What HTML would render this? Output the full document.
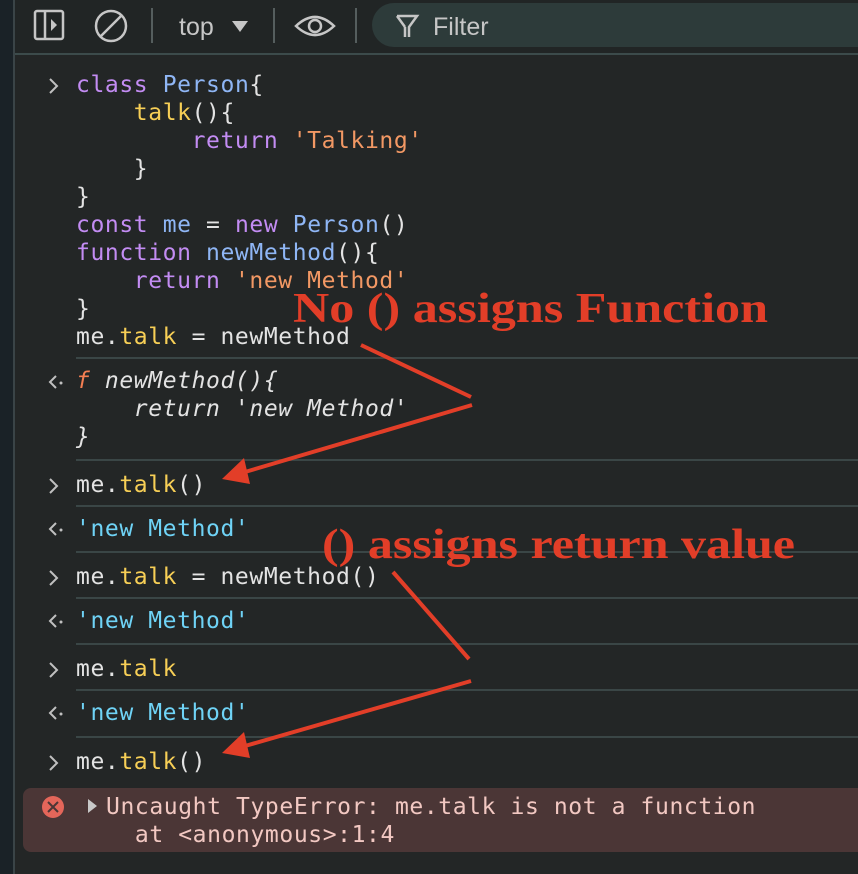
<!DOCTYPE html>
<html><head><meta charset="utf-8"><style>
body{margin:0;width:858px;height:874px;background:#232626;overflow:hidden;position:relative;font-family:"DejaVu Sans Mono","Liberation Mono",monospace;}
.strip{position:absolute;left:0;top:0;width:13px;height:874px;background:#1a2227;border-right:2px solid #3a4447;}
.tb{position:absolute;left:15px;top:0;right:0;height:53px;background:#212525;border-bottom:2px solid #3c4b4b;}
.l{position:absolute;left:76px;font-size:23px;line-height:28px;height:28px;color:#e3e3e3;white-space:pre;letter-spacing:0.6px}
.sep{position:absolute;left:76px;right:0;height:2px;background:#3a4646}
.k{color:#c38cf3}.b{color:#8fb6f5}.y{color:#f7cf56}.s{color:#f29864}.c{color:#6fd3f6}.o{color:#f47e52}
.i{font-style:italic}
</style></head><body>
<div class="strip"></div>
<div class="tb">
<svg width="843" height="53" style="position:absolute;left:0;top:0">
<g stroke="#c6c6c6" fill="none" stroke-width="2.5">
<rect x="20" y="11" width="28" height="28" rx="2"/><line x1="30" y1="11" x2="30" y2="39"/>
<circle cx="96" cy="26" r="15"/><line x1="86" y1="36" x2="106" y2="16"/>
</g>
<path d="M36 19 L42 25 L36 31Z" fill="#c6c6c6"/>
<rect x="136" y="8" width="2" height="35" fill="#555e5e"/>
<text x="164" y="35" font-family="Liberation Sans" font-size="25" fill="#c6c6c6">top</text>
<path d="M217 21 L233 21 L225 32Z" fill="#c6c6c6"/>
<rect x="258" y="8" width="2" height="35" fill="#555e5e"/>
<path d="M281 26 Q300 8 319 26 Q300 44 281 26Z" stroke="#c6c6c6" stroke-width="2.5" fill="none"/>
<circle cx="300" cy="26" r="6" stroke="#c6c6c6" stroke-width="2.5" fill="none"/>
<rect x="340" y="8" width="2" height="35" fill="#555e5e"/>
<rect x="357" y="3" width="520" height="44" rx="22" fill="#2d3b3a"/>
<path d="M382 16 L402 16 L394 27 L394 37 M390 27 L390 37" stroke="#c6c6c6" stroke-width="2.5" fill="none"/>
<path d="M382 16 L390 27" stroke="#c6c6c6" stroke-width="2.5"/>
<text x="418" y="35" font-family="Liberation Sans" font-size="25" fill="#c6c6c6">Filter</text>
</svg>
</div>

<div class="l" style="top:71px"><span class="k">class</span> <span class="b">Person</span>{</div>
<div class="l" style="top:99px">    <span class="y">talk</span>(){</div>
<div class="l" style="top:127px">        <span class="k">return</span> <span class="s">'Talking'</span></div>
<div class="l" style="top:155px">    }</div>
<div class="l" style="top:183px">}</div>
<div class="l" style="top:211px"><span class="k">const</span> <span class="b">me</span> = <span class="k">new</span> <span class="b">Person</span>()</div>
<div class="l" style="top:239px"><span class="k">function</span> <span class="b">newMethod</span>(){</div>
<div class="l" style="top:267px">    <span class="k">return</span> <span class="s">'new Method'</span></div>
<div class="l" style="top:295px">}</div>
<div class="l" style="top:323px">me.<span class="y">talk</span> = newMethod</div>
<div class="sep" style="top:357px"></div>

<div class="l i" style="top:367px"><span class="o">f</span> newMethod(){</div>
<div class="l i" style="top:395px">    return 'new Method'</div>
<div class="l i" style="top:423px">}</div>
<div class="sep" style="top:459px"></div>

<div class="l" style="top:471px">me.<span class="y">talk</span>()</div>
<div class="sep" style="top:505px"></div>
<div class="l c" style="top:515px">'new Method'</div>
<div class="sep" style="top:551px"></div>
<div class="l" style="top:563px">me.<span class="y">talk</span> = newMethod()</div>
<div class="sep" style="top:597px"></div>
<div class="l c" style="top:607px">'new Method'</div>
<div class="sep" style="top:643px"></div>
<div class="l" style="top:655px">me.<span class="y">talk</span></div>
<div class="sep" style="top:689px"></div>
<div class="l c" style="top:699px">'new Method'</div>
<div class="sep" style="top:736px"></div>
<div class="l" style="top:748px">me.<span class="y">talk</span>()</div>

<div style="position:absolute;left:23px;top:788px;width:850px;height:64px;background:#4b3636;border-radius:8px"></div>
<svg width="858" height="874" style="position:absolute;left:0;top:0">
<g stroke="#c0c0c0" stroke-width="2" fill="none">
<path d="M50 79 L57 86 L50 93"/>
<path d="M50 479 L57 486 L50 493"/>
<path d="M50 571 L57 578 L50 585"/>
<path d="M50 663 L57 670 L50 677"/>
<path d="M50 756 L57 763 L50 770"/>
<path d="M56 376 L50 382 L56 388"/>
<path d="M56 523 L50 529 L56 535"/>
<path d="M56 615 L50 621 L56 627"/>
<path d="M56 707 L50 713 L56 719"/>
</g>
<g fill="#c0c0c0">
<circle cx="61" cy="383" r="1.5"/><circle cx="61" cy="530" r="1.5"/><circle cx="61" cy="622" r="1.5"/><circle cx="61" cy="714" r="1.5"/>
</g>
<circle cx="53" cy="807" r="11" fill="#e4665a"/>
<path d="M48 802 L58 812 M58 802 L48 812" stroke="#4b3636" stroke-width="2"/>
<path d="M88 799 L97 806 L88 813Z" fill="#c8c8c8"/>
<g stroke="#e23e28" stroke-width="4" fill="none">
<line x1="361" y1="345" x2="471" y2="397"/>
<line x1="472" y1="405" x2="245" y2="472"/>
<line x1="393" y1="572" x2="469" y2="659"/>
<line x1="471" y1="681" x2="245" y2="746"/>
</g>
<path d="M222 479 L244 458 L250 484Z" fill="#e23e28"/>
<path d="M222 753 L244 732 L250 758Z" fill="#e23e28"/>
<text x="293" y="322" font-family="Liberation Serif" font-weight="bold" font-size="42" fill="#e23e28" textLength="475" lengthAdjust="spacingAndGlyphs">No () assigns Function</text>
<text x="322" y="558" font-family="Liberation Serif" font-weight="bold" font-size="42" fill="#e23e28" textLength="473" lengthAdjust="spacingAndGlyphs">() assigns return value</text>
</svg>
<div class="l" style="top:793px;left:106px;color:#f2c8c2">Uncaught TypeError: me.talk is not a function</div>
<div class="l" style="top:821px;left:106px;color:#f2c8c2">  at &lt;anonymous&gt;:1:4</div>
</body></html>
